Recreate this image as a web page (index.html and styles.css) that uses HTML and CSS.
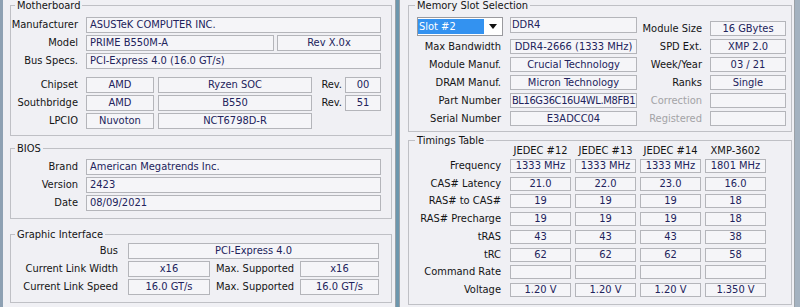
FILE: index.html
```html
<!DOCTYPE html>
<html lang="en">
<head>
<meta charset="utf-8">
<title>CPU-Z Mainboard / SPD</title>
<link rel="stylesheet" href="styles.css">
</head>
<body>
<div class="screen">
  <div class="win win-left">
    <fieldset class="grp mb">
      <legend>Motherboard</legend>
      <div class="row"><span class="lbl">Manufacturer</span><span class="box grow">ASUSTeK COMPUTER INC.</span></div>
      <div class="row"><span class="lbl">Model</span><span class="box w-model">PRIME B550M-A</span><span class="box w-rev center">Rev X.0x</span></div>
      <div class="row"><span class="lbl">Bus Specs.</span><span class="box grow">PCI-Express 4.0 (16.0 GT/s)</span></div>
      <div class="row sep"><span class="lbl">Chipset</span><span class="box w-vendor center">AMD</span><span class="box w-chip center">Ryzen SOC</span><span class="rev">Rev.</span><span class="box w-revno center">00</span></div>
      <div class="row"><span class="lbl">Southbridge</span><span class="box w-vendor center">AMD</span><span class="box w-chip center">B550</span><span class="rev">Rev.</span><span class="box w-revno center">51</span></div>
      <div class="row"><span class="lbl">LPCIO</span><span class="box w-vendor center">Nuvoton</span><span class="box w-chip center">NCT6798D-R</span></div>
    </fieldset>

    <fieldset class="grp bios">
      <legend>BIOS</legend>
      <div class="row"><span class="lbl">Brand</span><span class="box grow">American Megatrends Inc.</span></div>
      <div class="row"><span class="lbl">Version</span><span class="box grow">2423</span></div>
      <div class="row"><span class="lbl">Date</span><span class="box grow">08/09/2021</span></div>
    </fieldset>

    <fieldset class="grp gi">
      <legend>Graphic Interface</legend>
      <div class="row"><span class="lbl">Bus</span><span class="box grow center">PCI-Express 4.0</span></div>
      <div class="row"><span class="lbl">Current Link Width</span><span class="box w-cur center">x16</span><span class="mid">Max. Supported</span><span class="box w-max center">x16</span></div>
      <div class="row"><span class="lbl">Current Link Speed</span><span class="box w-cur center">16.0 GT/s</span><span class="mid">Max. Supported</span><span class="box w-max center">16.0 GT/s</span></div>
    </fieldset>
  </div>

  <div class="divider"></div>

  <div class="win win-right">
    <fieldset class="grp mem">
      <legend>Memory Slot Selection</legend>
      <div class="mem-grid">
        <div class="select">
          <span class="sel-val">Slot #2</span>
          <span class="sel-arrow"><svg width="8" height="5" viewBox="0 0 8 5"><path d="M0 0H8L4 5Z" fill="#111"/></svg></span>
        </div>
        <span class="box first">DDR4</span>
        <span class="lbl r end">Module Size</span>
        <span class="box center end">16 GBytes</span>

        <span class="lbl">Max Bandwidth</span>
        <span class="box center">DDR4-2666 (1333 MHz)</span>
        <span class="lbl r">SPD Ext.</span>
        <span class="box center">XMP 2.0</span>

        <span class="lbl">Module Manuf.</span>
        <span class="box center">Crucial Technology</span>
        <span class="lbl r">Week/Year</span>
        <span class="box center">03 / 21</span>

        <span class="lbl">DRAM Manuf.</span>
        <span class="box center">Micron Technology</span>
        <span class="lbl r">Ranks</span>
        <span class="box center">Single</span>

        <span class="lbl">Part Number</span>
        <span class="box center tight">BL16G36C16U4WL.M8FB1</span>
        <span class="lbl r dim">Correction</span>
        <span class="box"></span>

        <span class="lbl">Serial Number</span>
        <span class="box center">E3ADCC04</span>
        <span class="lbl r dim">Registered</span>
        <span class="box"></span>
      </div>
    </fieldset>

    <fieldset class="grp tim">
      <legend>Timings Table</legend>
      <div class="tim-grid">
        <span></span>
        <span class="hd">JEDEC #12</span>
        <span class="hd">JEDEC #13</span>
        <span class="hd">JEDEC #14</span>
        <span class="hd">XMP-3602</span>

        <span class="lbl">Frequency</span>
        <span class="box center">1333 MHz</span><span class="box center">1333 MHz</span><span class="box center">1333 MHz</span><span class="box center">1801 MHz</span>

        <span class="lbl">CAS# Latency</span>
        <span class="box center">21.0</span><span class="box center">22.0</span><span class="box center">23.0</span><span class="box center">16.0</span>

        <span class="lbl">RAS# to CAS#</span>
        <span class="box center">19</span><span class="box center">19</span><span class="box center">19</span><span class="box center">18</span>

        <span class="lbl">RAS# Precharge</span>
        <span class="box center">19</span><span class="box center">19</span><span class="box center">19</span><span class="box center">18</span>

        <span class="lbl">tRAS</span>
        <span class="box center">43</span><span class="box center">43</span><span class="box center">43</span><span class="box center">38</span>

        <span class="lbl">tRC</span>
        <span class="box center">62</span><span class="box center">62</span><span class="box center">62</span><span class="box center">58</span>

        <span class="lbl">Command Rate</span>
        <span class="box"></span><span class="box"></span><span class="box"></span><span class="box"></span>

        <span class="lbl">Voltage</span>
        <span class="box center">1.20 V</span><span class="box center">1.20 V</span><span class="box center">1.20 V</span><span class="box center">1.350 V</span>
      </div>
    </fieldset>
  </div>
  <div class="edge"></div>
</div>
</body>
</html>
```

FILE: styles.css
```css
* { box-sizing: border-box; }
html, body { margin: 0; padding: 0; }
body {
  width: 800px;
  height: 307px;
  overflow: hidden;
  background: #eef0f3;
  font-family: "DejaVu Sans Condensed", "DejaVu Sans", sans-serif;
  font-stretch: condensed;
  font-size: 11px;
  color: #141414;
}
.screen { display: flex; height: 307px; }
.win {
  background: #f0f0f4;
  height: 307px;
  display: flex;
  flex-direction: column;
  align-items: flex-start;
}
.win-left {
  width: 396px;
  border-left: 3px solid #8ea1b3;
  border-right: 1px solid #9ba1a7;
  padding-left: 7px;
}
.divider {
  width: 4px;
  background: #6d97ad;
  border-right: 1px solid #9ba1a7;
}
.win-right {
  width: 395px;
  border-right: 1px solid #9ba1a7;
  padding-left: 8px;
}
.edge { width: 5px; background: #a4b2c0; }

/* group boxes */
.grp {
  border: 1px solid #bfc0c5;
  margin: 0;
  padding: 0;
  min-width: 0;
}
.grp legend {
  padding: 0 2px;
  margin-left: 4px;
  line-height: 11px;
  color: #141414;
}

/* value boxes */
.box {
  display: block;
  border: 1px solid #b4b5ba;
  background: #f5f5f8;
  color: #22235c;
  height: 16px;
  line-height: 14px;
  padding: 0 3px;
  white-space: nowrap;
  overflow: hidden;
}
.center { text-align: center; }
.tight { letter-spacing: -0.35px; padding: 0; }
.lbl { white-space: nowrap; text-align: right; }
.dim { color: #a3a3a6; }

/* rows (left window) */
.row { display: flex; height: 16px; }
.row + .row { margin-top: 2px; }
.row.sep { margin-top: 8px; }
.row .lbl { line-height: 16px; flex: none; }
.row .box { flex: none; }
.grow { flex: 1 1 auto !important; }

/* Motherboard */
.mb { width: 382px; padding: 6px 10px 6px 0; }
.mb .lbl, .bios .lbl { width: 67px; margin-right: 8px; }
.w-model { width: 188px; }
.w-rev { width: 104px; margin-left: 3px; }
.w-vendor { width: 68px; }
.w-chip { width: 154px; margin-left: 4px; }
.rev { width: 33px; line-height: 16px; text-align: right; padding-right: 3px; }
.w-revno { width: 36px; }

/* BIOS */
.bios { width: 382px; margin-top: 7px; padding: 5px 10px 7px 0; }

/* Graphic interface */
.gi { width: 382px; margin-top: 10px; padding: 3px 12px 7px 0; }
.gi .lbl { width: 107px; margin-right: 10px; }
.w-cur { width: 82px; }
.mid { width: 90px; text-align: center; line-height: 16px; white-space: nowrap; }
.w-max { width: 79px; }

/* Memory slot selection */
.mem { width: 384px; padding: 6px 5px 5px 0; }
.mem legend { margin-left: 6px; }
.mem-grid {
  display: grid;
  grid-template-columns: 101px 127px 73px 76px;
  grid-template-rows: 19px repeat(5, 15px);
  row-gap: 3px;
}
.mem-grid .lbl { line-height: 15px; padding-right: 9px; }
.mem-grid .lbl.r { padding-right: 8px; }
.mem-grid .box { height: 15px; line-height: 13px; }
.mem-grid .box.first { height: 16px; line-height: 14px; align-self: start; padding-left: 1px; }
.mem-grid .end { align-self: end; }

.select {
  margin-left: 8px;
  width: 86px;
  height: 19px;
  border: 1px solid #9a9a9e;
  background: #ffffff;
  display: flex;
  padding: 1px 0 1px 0;
}
.sel-val {
  flex: 1;
  background: #3392f0;
  color: #ffffff;
  line-height: 15px;
  padding-left: 1px;
  white-space: nowrap;
}
.sel-arrow {
  width: 18px;
  display: flex;
  align-items: center;
  justify-content: center;
}
.sel-arrow svg { display: block; }

/* Timings table */
.tim { width: 384px; margin-top: 3px; padding: 0 5px 7px 0; }
.tim legend { margin-left: 6px; }
.tim-grid {
  display: grid;
  grid-template-columns: 97px repeat(4, 61px);
  grid-template-rows: 9px repeat(8, 14px);
  column-gap: 4px;
  row-gap: 3.75px;
}
.tim-grid .hd { text-align: center; line-height: 9px; white-space: nowrap; }
.tim-grid .lbl { line-height: 14px; padding-right: 5px; }
.tim-grid .box { height: 14px; line-height: 12px; padding: 0 1px; }
```
